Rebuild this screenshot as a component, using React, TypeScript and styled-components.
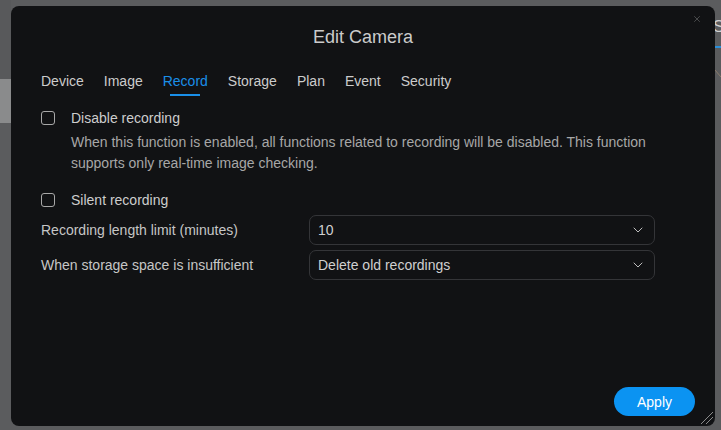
import React from 'react';
import styled, { createGlobalStyle } from 'styled-components';
import { ChevronDown, X } from 'lucide-react';

const GlobalStyle = createGlobalStyle`
  html, body {
    margin: 0;
    padding: 0;
    background: #5b5c5e;
    font-family: 'Liberation Sans', Arial, sans-serif;
    overflow: hidden;
  }
`;

const Page = styled.div`
  width: 721px;
  height: 430px;
  display: flex;
  background: #5b5c5e;
  overflow: hidden;
`;

const LeftStrip = styled.div`
  width: 11px;
  display: flex;
  flex-direction: column;
`;

const Band = styled.div<{ $h: number; $c: string }>`
  height: ${(p) => p.$h}px;
  background: ${(p) => p.$c};
`;

const RightStrip = styled.div`
  flex: 1;
  display: flex;
  flex-direction: column;
  overflow: hidden;
  padding-top: 18px;
`;

const PeekText = styled.div`
  font-size: 17px;
  color: #d0d0d0;
  margin-left: -2px;
  line-height: 18px;
  white-space: nowrap;
`;

const PeekLine = styled.div`
  height: 2px;
  margin-top: 10px;
  background: #2b8fd9;
`;

const PeekSlash = styled.svg`
  margin-top: 22px;
  display: block;
`;

const Dialog = styled.div`
  margin-top: 6px;
  width: 704px;
  height: 420px;
  background: #111214;
  border-radius: 8px;
  display: flex;
  flex-direction: column;
  position: relative;
  box-sizing: border-box;
  padding: 0 30px;
`;

const CloseButton = styled.div`
  position: absolute;
  top: 8px;
  right: 13px;
  color: #6a6b6d;
  display: flex;
`;

const Title = styled.div`
  text-align: center;
  font-size: 18px;
  color: #cbcbcb;
  padding-top: 21px;
  line-height: 20px;
`;

const Tabs = styled.div`
  display: flex;
  gap: 20px;
  margin-top: 26px;
`;

const Tab = styled.div<{ $active?: boolean }>`
  font-size: 14px;
  line-height: 16px;
  color: ${(p) => (p.$active ? '#1a8fe8' : '#cccccc')};
  padding-bottom: 7px;
  position: relative;

  &::after {
    content: '';
    display: ${(p) => (p.$active ? 'block' : 'none')};
    position: absolute;
    left: 50%;
    transform: translateX(-50%);
    bottom: 0;
    width: 30px;
    height: 2px;
    background: #1a8fe8;
  }
`;

const Section = styled.div<{ $mt: number }>`
  display: flex;
  flex-direction: column;
  margin-top: ${(p) => p.$mt}px;
`;

const CheckRow = styled.label`
  display: flex;
  align-items: center;
  gap: 16px;
  height: 20px;
  font-size: 14px;
  color: #cdcdcd;
`;

const Box = styled.span`
  width: 12px;
  height: 12px;
  border: 1px solid #a8a8a8;
  border-radius: 3px;
  flex-shrink: 0;
`;

const Description = styled.div`
  margin-left: 30px;
  margin-top: 4px;
  font-size: 14px;
  line-height: 21px;
  color: #a7a7a7;
`;

const FieldRow = styled.div`
  display: grid;
  grid-template-columns: 268px 346px;
  align-items: center;
  margin-top: 5px;
  font-size: 14px;
  color: #c6c6c6;
`;

const Select = styled.div`
  height: 30px;
  box-sizing: border-box;
  border: 1px solid #343538;
  border-radius: 7px;
  display: flex;
  align-items: center;
  justify-content: space-between;
  padding: 0 8px;
  color: #d0d0d0;
  font-size: 14px;
`;

const Footer = styled.div`
  margin-top: auto;
  display: flex;
  justify-content: flex-end;
  padding-bottom: 10px;
  margin-right: -10px;
`;

const ApplyButton = styled.button`
  width: 81px;
  height: 29px;
  border: none;
  border-radius: 15px;
  background: #0b93f2;
  color: #ffffff;
  font-family: 'Liberation Sans', Arial, sans-serif;
  font-size: 14px;
  padding: 0;
`;

const Grip = styled.svg`
  position: absolute;
  right: 1px;
  bottom: 1px;
`;

const tabs = ['Device', 'Image', 'Record', 'Storage', 'Plan', 'Event', 'Security'];

export default function App() {
  return (
    <>
      <GlobalStyle />
      <Page>
        <LeftStrip>
          <Band $h={79} $c="#58595b" />
          <Band $h={44} $c="#8a8b8c" />
          <Band $h={307} $c="#5b5c5e" />
        </LeftStrip>
        <Dialog>
          <CloseButton>
            <X size={10} strokeWidth={1.5} />
          </CloseButton>
          <Title>Edit Camera</Title>
          <Tabs>
            {tabs.map((t) => (
              <Tab key={t} $active={t === 'Record'}>
                {t}
              </Tab>
            ))}
          </Tabs>
          <Section $mt={12}>
            <CheckRow>
              <Box />
              Disable recording
            </CheckRow>
            <Description>
              When this function is enabled, all functions related to recording will be disabled. This function
              <br />
              supports only real-time image checking.
            </Description>
          </Section>
          <Section $mt={16}>
            <CheckRow>
              <Box />
              Silent recording
            </CheckRow>
          </Section>
          <FieldRow>
            <span>Recording length limit (minutes)</span>
            <Select>
              <span>10</span>
              <ChevronDown size={16} strokeWidth={1.5} color="#bdbdbd" />
            </Select>
          </FieldRow>
          <FieldRow>
            <span>When storage space is insufficient</span>
            <Select>
              <span>Delete old recordings</span>
              <ChevronDown size={16} strokeWidth={1.5} color="#bdbdbd" />
            </Select>
          </FieldRow>
          <Footer>
            <ApplyButton>Apply</ApplyButton>
          </Footer>
          <Grip width="16" height="16" viewBox="0 0 16 16">
            <line x1="15" y1="3" x2="3" y2="15" stroke="#8a8a8a" strokeWidth="1" />
            <line x1="15" y1="8" x2="8" y2="15" stroke="#8a8a8a" strokeWidth="1" />
          </Grip>
        </Dialog>
        <RightStrip>
          <PeekText>S</PeekText>
          <PeekLine />
          <PeekSlash width="6" height="8" viewBox="0 0 6 8">
            <line x1="0" y1="0" x2="6" y2="7" stroke="#8a7a6a" strokeWidth="1" />
          </PeekSlash>
        </RightStrip>
      </Page>
    </>
  );
}
